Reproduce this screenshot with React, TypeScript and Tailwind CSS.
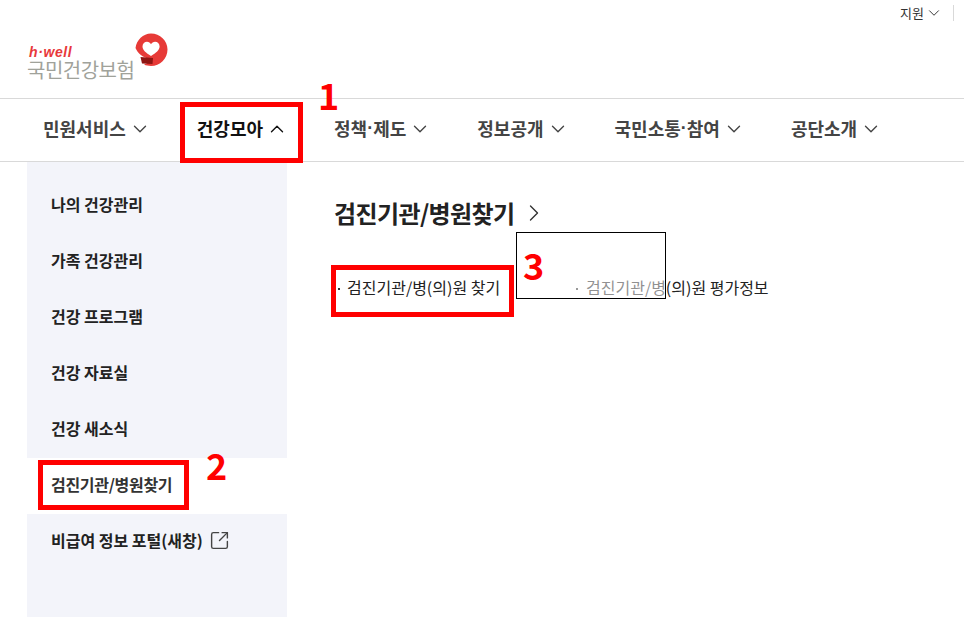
import { ChevronDown, ChevronRight, ChevronUp, SquareArrowOutUpRight } from "lucide-react"

const font = "[font-family:'Noto_Sans_CJK_KR','Noto_Sans',sans-serif]"

const navItems = [
  { label: "민원서비스", open: false },
  { label: "건강모아", open: true },
  { label: "정책·제도", open: false },
  { label: "정보공개", open: false },
  { label: "국민소통·참여", open: false },
  { label: "공단소개", open: false },
]

const sideItems = ["나의 건강관리", "가족 건강관리", "건강 프로그램", "건강 자료실", "건강 새소식"]

const Logo = () => (
  <div className="relative h-[50px] w-[145px]">
    <span className="absolute left-[2px] top-[12px] text-[14px] font-bold italic leading-[14px] tracking-[0.6px] text-[#e8383b] [font-family:'Liberation_Sans',sans-serif]">
      h·well
    </span>
    <span className="absolute left-0 top-[27px] text-[20px] leading-[20px] tracking-[-0.5px] text-[#a0a29a]">
      국민건강보험
    </span>
    <svg className="absolute left-[107px] top-0" width="35" height="34" viewBox="0 0 35 34">
      <path d="M17 0.5C26 0.5 33.5 7.5 33.5 16.5C33.5 25.5 26 33 17 33C14.5 33 12 32.6 10 31.6C13 30.5 15.5 29 16.5 26C9 25 3.5 20 1.5 15C2.5 7 9 0.5 17 0.5Z" fill="#e73a37" />
      <path d="M17 23C12 20 8.5 17 8.5 13.5C8.5 10.5 10.7 8.8 13 8.8C14.8 8.8 16.2 9.8 17 11.2C17.8 9.8 19.3 8.8 21.1 8.8C23.5 8.8 25.6 10.5 25.6 13.5C25.6 17 22 20 17 23Z" fill="#fff" />
      <path d="M6.5 24L19 25L18.5 31L8 30.5Z" fill="#8f1512" />
    </svg>
  </div>
)

const App = () => {
  return (
    <div className={`relative h-[617px] w-[964px] overflow-hidden bg-white ${font}`}>
      {/* 상단 */}
      <header className="relative h-[99px] border-b border-[#d9d9d9]">
        <div className="flex justify-end pr-[10px] pt-[3px]">
          <span className="flex items-center text-[13px] leading-[20px] text-[#333]">
            지원
            <ChevronDown size={18} strokeWidth={1.3} className="ml-[1px]" />
            <span className="ml-[10px] h-[16px] w-px bg-[#d9d9d9]" />
          </span>
        </div>
        <div className="pl-[27px] pt-[10px]">
          <Logo />
        </div>
      </header>

      {/* 메뉴 */}
      <nav className="flex h-[63px] items-center gap-[46px] border-b border-[#d9d9d9] pb-[3px] pl-[43px]">
        {navItems.map((item) => (
          <div
            key={item.label}
            className={`flex items-center gap-[3px] text-[18px] font-bold ${item.open ? "text-[#111]" : "text-[#444]"}`}
          >
            <span className="flex">
              {item.label.split("·").map((part, i) => (
                <span key={part} className="flex">
                  {i > 0 && <span className="[font-family:'Liberation_Sans',sans-serif]">·</span>}
                  {part}
                </span>
              ))}
            </span>
            {item.open ? (
              <ChevronUp size={22} strokeWidth={1.5} />
            ) : (
              <ChevronDown size={22} strokeWidth={1.5} />
            )}
          </div>
        ))}
      </nav>

      <div className="flex">
        {/* 사이드 */}
        <aside className="ml-[27px] h-[455px] w-[260px] bg-[#f3f4fa] pt-[16px]">
          {sideItems.map((label) => (
            <div key={label} className="flex h-[56px] items-center pb-[4px] pl-[24px] text-[16px] font-bold text-[#222]">
              {label}
            </div>
          ))}
          <div className="flex h-[56px] items-center bg-white pb-[4px] pl-[24px] text-[16px] font-bold tracking-[-0.3px] text-[#333]">
            검진기관/병원찾기
          </div>
          <div className="flex h-[56px] items-center gap-[6px] pb-[4px] pl-[24px] text-[16px] font-bold text-[#222]">
            비급여 정보 포털(새창)
            <SquareArrowOutUpRight size={21} strokeWidth={1.6} className="text-[#444]" />
          </div>
        </aside>

        {/* 본문 */}
        <main className="pl-[47px] pt-[33px]">
          <div className="flex items-center gap-[5px]">
            <h2 className="text-[24px] font-bold leading-[36px] tracking-[-0.6px] text-[#222]">검진기관/병원찾기</h2>
            <ChevronRight size={28} strokeWidth={1.2} className="text-[#333]" />
          </div>
          <div className="mt-[45px] flex text-[16px] leading-[22px] text-[#222]">
            <span className="flex w-[241px] items-center pl-[4px]">
              <span className="mr-[7px] mt-[3px] size-[2px] bg-[#333]" />
              검진기관/병(의)원 찾기
            </span>
            <span className="flex items-center pl-[1px]">
              <span className="mr-[8px] mt-[3px] size-[2px] bg-[#333]" />
              검진기관/병(의)원 평가정보
            </span>
          </div>
        </main>
      </div>

      {/* 안내 표시 */}
      <div className="absolute left-[180px] top-[102px] h-[61px] w-[123px] border-[5px] border-[#ff0000]" />
      <div className="absolute left-[38px] top-[460px] h-[50px] w-[151px] border-[5px] border-[#ff0000]" />
      <div className="absolute left-[331px] top-[265px] h-[52px] w-[183px] border-[5px] border-[#ff0000]" />
      <div className="absolute left-[516px] top-[232px] h-[67px] w-[150px] border border-black bg-white/50" />
      <span className="absolute left-[318px] top-[73px] text-[36px] font-bold leading-[42px] text-[#ff0000]">1</span>
      <span className="absolute left-[206px] top-[443px] text-[36px] font-bold leading-[42px] text-[#ff0000]">2</span>
      <span className="absolute left-[523px] top-[243px] text-[36px] font-bold leading-[42px] text-[#ff0000]">3</span>
    </div>
  )
}

export default App
